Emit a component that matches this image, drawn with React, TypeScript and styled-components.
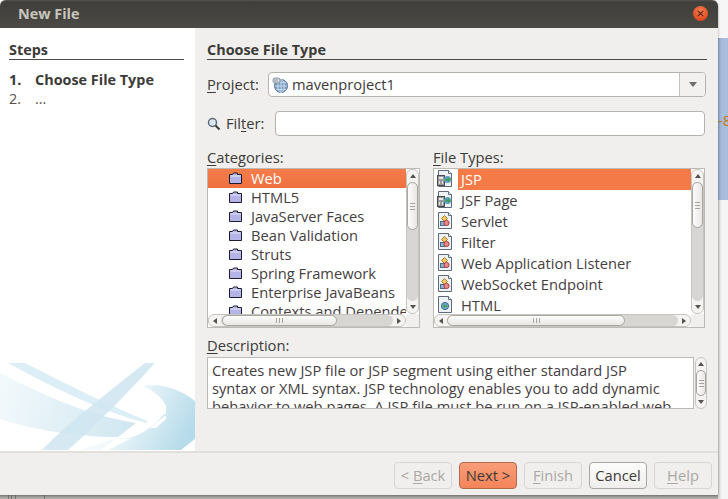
import React from 'react'
import styled, { createGlobalStyle } from 'styled-components'

const GlobalStyle = createGlobalStyle`
    html, body { margin: 0; padding: 0; background: #fff; }
    body { font-family: "Open Sans", "Noto Sans", "Liberation Sans", sans-serif; font-size: 14.7px; color: #3c3b37; }
`

const Screen = styled.div`
    width: 728px;
    height: 499px;
    overflow: hidden;
    display: grid;
    grid-template-columns: 718px 10px;
    grid-template-rows: 495px 4px;
`

const Dialog = styled.div`
    display: flex;
    flex-direction: column;
    background: #f0efed;
    border-radius: 6px 6px 0 0;
    box-shadow: 0 0 2px rgba(0, 0, 0, 0.5);
    position: relative;
    z-index: 1;
    grid-row: 1;
    grid-column: 1;
`

const TitleBar = styled.div`
    height: 28px;
    flex: none;
    display: flex;
    align-items: center;
    justify-content: space-between;
    padding: 0 10px 0 18px;
    border-radius: 6px 6px 0 0;
    background: linear-gradient(#55534d 0, #3f3e3a 2px, #4c4a45 100%);
`

const Title = styled.div`
    font-weight: 700;
    font-size: 14.4px;
    line-height: 18px;
    padding-bottom: 1px;
    color: #c8c5bc;
`

const CloseButton = styled.div`
    width: 15px;
    height: 15px;
    margin-bottom: 1px;
    border-radius: 50%;
    background: radial-gradient(circle at 50% 35%, #f58052, #de4a1e 75%);
    display: flex;
    align-items: center;
    justify-content: center;
`

const Main = styled.div`
    height: 423px;
    flex: none;
    display: flex;
`

const Sidebar = styled.div`
    width: 195px;
    flex: none;
    background: #fff;
    padding: 14px 11px 0 9px;
    box-sizing: border-box;
    display: flex;
    flex-direction: column;
`

const Heading = styled.div`
    font-weight: 700;
    font-size: 14.4px;
    line-height: 15px;
    border-bottom: 1px solid #4a4a46;
    height: 17px;
    white-space: nowrap;
`

const StepList = styled.div`
    margin-top: 11px;
    display: flex;
    flex-direction: column;
`

const Step = styled.div<{ $current?: boolean }>`
    display: flex;
    height: 19px;
    line-height: 17px;
    font-weight: ${(p) => (p.$current ? 700 : 400)};
    font-size: 14.4px;
    color: ${(p) => (p.$current ? '#3c3b37' : '#55534e')};
`

const StepNumber = styled.span`
    width: 26px;
`

const Watermark = styled.svg`
    display: block;
    width: 195px;
    height: 90px;
    margin: auto -11px 0 -9px;
    flex: none;
`

const Content = styled.div`
    flex: 1;
    padding: 14px 11px 0 12px;
    display: flex;
    flex-direction: column;
    min-width: 0;
`

const FormRow = styled.div<{ $top: number }>`
    display: flex;
    align-items: center;
    margin-top: ${(p) => p.$top}px;
    height: 25px;
`

const Label = styled.label<{ $width: number }>`
    width: ${(p) => p.$width}px;
    flex: none;
    white-space: nowrap;
    color: #3c3b37;
    padding-bottom: 2px;
    u { text-underline-offset: 2px; }
`

const Combo = styled.div`
    width: 438px;
    height: 25px;
    box-sizing: border-box;
    border: 1px solid #b5b3ae;
    border-radius: 4px;
    background: #fff;
    display: flex;
    align-items: center;
    padding-left: 3px;
    gap: 4px;
`

const ComboText = styled.span`
    padding-bottom: 2px;
`

const ComboArrow = styled.div`
    margin-left: auto;
    width: 25px;
    align-self: stretch;
    border-left: 1px solid #c4c2bd;
    border-radius: 0 3px 3px 0;
    background: #f2f1ef;
    display: flex;
    align-items: center;
    justify-content: center;
    &::after {
        content: '';
        border: 4px solid transparent;
        border-top: 5px solid #6e6d69;
        border-bottom: 0;
    }
`

const FilterIcon = styled.svg`
    width: 14px;
    height: 14px;
    margin-right: 5px;
    flex: none;
`

const TextInput = styled.div`
    width: 430px;
    height: 25px;
    box-sizing: border-box;
    border: 1px solid #b5b3ae;
    border-radius: 4px;
    background: #fff;
`

const Columns = styled.div`
    display: flex;
    gap: 13px;
    margin-top: 12px;
    height: 180px;
`

const Column = styled.div<{ $width: number }>`
    width: ${(p) => p.$width}px;
    display: flex;
    flex-direction: column;
`

const FieldLabel = styled.div`
    height: 20px;
    line-height: 18px;
    u { text-underline-offset: 2px; }
`

const ListBox = styled.div`
    height: 160px;
    box-sizing: border-box;
    border: 1px solid #bdbbb6;
    background: #fff;
    display: grid;
    grid-template-rows: 145px 13px;
    grid-template-columns: 1fr 13px;
`

const Viewport = styled.div`
    overflow: hidden;
    min-width: 0;
    min-height: 0;
`

const Row = styled.div<{ $height: number; $indent: number }>`
    height: ${(p) => p.$height}px;
    display: flex;
    align-items: center;
    padding-left: ${(p) => p.$indent}px;
    white-space: nowrap;
    color: #45403f;
`

const CategoryRow = styled(Row)<{ $selected?: boolean }>`
    background: ${(p) => (p.$selected ? 'linear-gradient(#f47c4a, #ee7240)' : 'transparent')};
    color: ${(p) => (p.$selected ? '#fff' : '#45403f')};
`

const CategoryName = styled.span`
    margin-left: 9px;
    padding-bottom: 1px;
`

const TypeLabel = styled.div<{ $selected?: boolean }>`
    flex: 1;
    height: 100%;
    box-sizing: border-box;
    display: flex;
    align-items: center;
    margin-left: 4px;
    padding: 0 0 2px 3px;
    background: ${(p) => (p.$selected ? '#f47b47' : 'transparent')};
    color: ${(p) => (p.$selected ? '#fff' : '#45403f')};
`

const Track = styled.div<{ $vertical?: boolean }>`
    display: flex;
    flex-direction: ${(p) => (p.$vertical ? 'column' : 'row')};
    background: #f4f3f1;
    border: 1px solid #c6c4bf;
    border-radius: 6px;
    box-sizing: border-box;
    min-width: 0;
    min-height: 0;
    overflow: hidden;
`

const Trough = styled.div<{ $vertical?: boolean }>`
    flex: 1;
    display: flex;
    flex-direction: ${(p) => (p.$vertical ? 'column' : 'row')};
    background: #d8d6d2;
    border-radius: 6px;
    min-width: 0;
    min-height: 0;
`

const Thumb = styled.div<{ $vertical?: boolean; $size: number; $offset?: number }>`
    flex: none;
    box-sizing: border-box;
    border: 1px solid #a8a6a1;
    border-radius: 6px;
    background: linear-gradient(${(p) => (p.$vertical ? '90deg' : '180deg')}, #fcfcfb, #e8e7e4);
    ${(p) => (p.$vertical ? `height: ${p.$size}px; margin-top: ${p.$offset ?? 0}px;` : `width: ${p.$size}px; margin-left: ${p.$offset ?? 0}px;`)}
    display: flex;
    flex-direction: ${(p) => (p.$vertical ? 'column' : 'row')};
    align-items: center;
    justify-content: center;
    gap: 2px;
`

const Grip = styled.span<{ $vertical?: boolean }>`
    background: #a5a39e;
    ${(p) => (p.$vertical ? 'width: 5px; height: 1px;' : 'width: 1px; height: 5px;')}
`

const Arrow = styled.div<{ $dir: 'up' | 'down' | 'left' | 'right' }>`
    flex: none;
    ${(p) => (p.$dir === 'up' || p.$dir === 'down' ? 'height: 12px;' : 'width: 12px;')}
    display: flex;
    align-items: center;
    justify-content: center;
    &::after {
        content: '';
        border: 3px solid transparent;
        ${(p) => `border-${{ up: 'bottom', down: 'top', left: 'right', right: 'left' }[p.$dir]}: 4px solid #55534e;`}
        ${(p) => `border-${p.$dir === 'up' ? 'top' : p.$dir === 'down' ? 'bottom' : p.$dir}: 0;`}
    }
`

const Corner = styled.div`
    background: #f0efed;
`

const DescriptionRow = styled.div`
    display: flex;
    height: 52px;
    gap: 1px;
`

const DescriptionBox = styled.div`
    flex: 1;
    box-sizing: border-box;
    border: 1px solid #bdbbb6;
    background: #fff;
    padding: 3px 4px;
    overflow: hidden;
    line-height: 18px;
    color: #45403f;
    white-space: nowrap;
`

const DescriptionLabel = styled(FieldLabel)`
    margin-top: 7px;
    height: 22px;
    line-height: 20px;
`

const SmallTrack = styled(Track)`
    width: 12px;
    flex: none;
`

const Footer = styled.div`
    flex: 1;
    border-top: 2px solid #e2e0dc;
    display: flex;
    justify-content: flex-end;
    gap: 7px;
    padding: 9px 6px 0 0;
    box-sizing: border-box;
`

const Button = styled.div<{ $variant?: 'primary' | 'disabled' }>`
    width: 58px;
    height: 27px;
    box-sizing: border-box;
    padding-bottom: 2px;
    border-radius: 4px;
    display: flex;
    align-items: center;
    justify-content: center;
    white-space: nowrap;
    border: 1px solid ${(p) => (p.$variant === 'primary' ? '#b06a4a' : p.$variant === 'disabled' ? '#d8d6d2' : '#a9a7a2')};
    background: ${(p) =>
        p.$variant === 'primary' ? 'linear-gradient(#f89d78, #f4845a)' : p.$variant === 'disabled' ? '#f0efed' : 'linear-gradient(#fcfcfb, #efeeec)'};
    color: ${(p) => (p.$variant === 'disabled' ? '#aaa8a3' : '#3c3b37')};
    u { text-underline-offset: 2px; }
`

const DesktopStrip = styled.div`
    grid-row: 1 / 3;
    grid-column: 2;
    display: flex;
    flex-direction: column;
    overflow: hidden;
`

const StripTop = styled.div`
    height: 38px;
    background: #f6f6f6;
`

const StripBlue = styled.div`
    height: 162px;
    background: linear-gradient(90deg, #8fa3c4, #a9bcdc 40%);
    color: #c77a14;
    font-size: 15px;
    line-height: 20px;
    padding-top: 72px;
    box-sizing: border-box;
    white-space: nowrap;
`

const StripRest = styled.div`
    flex: 1;
    background: linear-gradient(90deg, #d0cfcd, #f5f5f5 40%);
`

const BottomStrip = styled.div`
    grid-row: 2;
    grid-column: 1;
    background: linear-gradient(#8e8c88, #b3b2ae);
    padding-left: 8px;
    display: flex;
    gap: 3px;
`

const BottomTab = styled.span<{ $width: number }>`
    width: ${(p) => p.$width}px;
    border-left: 1px solid #76746f;
    border-right: 1px solid #76746f;
`

const RowIcon = styled.svg`
    flex: none;
    margin-bottom: 2px;
`

const ProjectIcon = styled.svg`
    flex: none;
`

const Scrollbar = ({ vertical, size, offset = 0 }: { vertical?: boolean; size: number; offset?: number }) => (
    <Track $vertical={vertical}>
        <Arrow $dir={vertical ? 'up' : 'left'} />
        <Trough $vertical={vertical}>
            <Thumb $vertical={vertical} $size={size} $offset={offset}>
                <Grip $vertical={vertical} />
                <Grip $vertical={vertical} />
                <Grip $vertical={vertical} />
            </Thumb>
        </Trough>
        <Arrow $dir={vertical ? 'down' : 'right'} />
    </Track>
)

const FolderIcon = () => (
    <RowIcon width="13" height="12" viewBox="0 0 13 12">
        <path d="M.5 2.5h3l1-1.5h4v1.5h4v9H.5z" fill="#b4b4e6" stroke="#1c1c30" />
        <path d="M1.5 3.5h10v1h-10z" fill="#e4e4f8" />
    </RowIcon>
)

const PageBase = () => (
    <>
        <path d="M2.5 1.5h10l3 3v13h-13z" fill="#eef2f6" stroke="#5d6a78" />
        <path d="M12.5 1.5v3h3" fill="#fff" stroke="#5d6a78" />
    </>
)

const JspIcon = () => (
    <RowIcon width="18" height="19" viewBox="0 0 18 19">
        <PageBase />
        <rect x="1.5" y="6.5" width="7" height="10" fill="#9a9a9a" stroke="#4a4a4a" />
        <rect x="3" y="8" width="4" height="2" fill="#e6e6e6" />
        <rect x="3" y="12" width="1" height="3" fill="#e6e6e6" />
        <rect x="6" y="12" width="1" height="3" fill="#e6e6e6" />
        <circle cx="11.5" cy="10.5" r="3.5" fill="#5aa0c8" />
        <path d="M9.5 9.5h2.5V8l2.5 2.5-2.5 2.5v-1.5H9.5z" fill="#3fa040" />
    </RowIcon>
)

const ServletIcon = () => (
    <RowIcon width="18" height="19" viewBox="0 0 18 19">
        <PageBase />
        <path d="M8.5 4.5l3 3-3 3-3-3z" fill="#f2c76a" stroke="#a8801f" />
        <rect x="4.5" y="10.5" width="5" height="4" fill="#8fb5d6" stroke="#4b6a87" />
        <circle cx="10.5" cy="12" r="2.6" fill="#e98888" stroke="#a83e3e" />
    </RowIcon>
)

const HtmlIcon = () => (
    <RowIcon width="18" height="19" viewBox="0 0 18 19">
        <PageBase />
        <circle cx="9" cy="11" r="3.6" fill="#6fa8c6" stroke="#3e6e8a" />
        <path d="M7 11l2-2v1.3h2v1.4H9V13z" fill="#3fa040" />
    </RowIcon>
)

const GlobeIcon = () => (
    <ProjectIcon width="16" height="16" viewBox="0 0 16 16">
        <circle cx="9" cy="9" r="6.5" fill="#7fa3c7" stroke="#4a6d91" />
        <path d="M2.5 9h13M9 2.5v13M4 5.5h10M4 12.5h10" stroke="#d4e1ee" strokeWidth="0.8" fill="none" />
        <ellipse cx="9" cy="9" rx="3.2" ry="6.5" stroke="#d4e1ee" strokeWidth="0.8" fill="none" />
        <rect x="1" y="1" width="7" height="5" rx="2" fill="#dfe4ea" stroke="#6d7a88" strokeWidth="0.8" />
        <path d="M3 2v3M5 2v3" stroke="#6d7a88" strokeWidth="0.8" />
    </ProjectIcon>
)

const categories = ['Web', 'HTML5', 'JavaServer Faces', 'Bean Validation', 'Struts', 'Spring Framework', 'Enterprise JavaBeans', 'Contexts and Dependency Injection']

const fileTypes = [
    { name: 'JSP', icon: <JspIcon /> },
    { name: 'JSF Page', icon: <JspIcon /> },
    { name: 'Servlet', icon: <ServletIcon /> },
    { name: 'Filter', icon: <ServletIcon /> },
    { name: 'Web Application Listener', icon: <ServletIcon /> },
    { name: 'WebSocket Endpoint', icon: <ServletIcon /> },
    { name: 'HTML', icon: <HtmlIcon /> },
]

const App = () => {
    return (
        <Screen>
            <GlobalStyle />
            <Dialog>
                <TitleBar>
                    <Title>New File</Title>
                    <CloseButton>
                        <svg width="7" height="7" viewBox="0 0 7 7">
                            <path d="M.8.8l5.4 5.4M6.2.8L.8 6.2" stroke="#5a2410" strokeWidth="1.2" />
                        </svg>
                    </CloseButton>
                </TitleBar>
                <Main>
                    <Sidebar>
                        <Heading>Steps</Heading>
                        <StepList>
                            <Step $current>
                                <StepNumber>1.</StepNumber>Choose File Type
                            </Step>
                            <Step>
                                <StepNumber>2.</StepNumber>...
                            </Step>
                        </StepList>
                        <Watermark viewBox="0 0 195 90">
                            <defs>
                                <linearGradient id="band" gradientUnits="userSpaceOnUse" x1="0" y1="30" x2="136" y2="70">
                                    <stop offset="0" stopColor="#f2f9fc" />
                                    <stop offset="1" stopColor="#cfe6f0" />
                                </linearGradient>
                                <linearGradient id="swoosh" gradientUnits="userSpaceOnUse" x1="125" y1="35" x2="190" y2="70">
                                    <stop offset="0" stopColor="#f4fafc" />
                                    <stop offset="1" stopColor="#b6dbea" />
                                </linearGradient>
                            </defs>
                            <path d="M0 12C45 35 90 55 136 62L118 76C75 76 30 68 0 58z" fill="url(#band)" />
                            <path d="M8 2H25C70 25 110 45 148 60L146 62C100 50 50 25 8 2z" fill="#dceef6" />
                            <path d="M155 2H145C110 30 70 60 42 89H68C90 70 125 35 155 2z" fill="#cfe5f0" opacity="0.85" />
                            <path d="M143 25C165 22 182 30 195 40V78L181 89H80L115 78L130 77C150 70 166 55 166 45C163 38 155 30 143 25z" fill="url(#swoosh)" />
                            <path d="M166 47L140 67H146L166 52z" fill="#fff" />
                            <path d="M166 54L150 67H156L166 58z" fill="#fff" />
                            <path d="M115 78H130L108 89H100z" fill="#fff" />
                        </Watermark>
                    </Sidebar>
                    <Content>
                        <Heading>Choose File Type</Heading>
                        <FormRow $top={12}>
                            <Label $width={61}>
                                <u>P</u>roject:
                            </Label>
                            <Combo>
                                <GlobeIcon />
                                <ComboText>mavenproject1</ComboText>
                                <ComboArrow />
                            </Combo>
                        </FormRow>
                        <FormRow $top={14}>
                            <FilterIcon viewBox="0 0 14 14">
                                <circle cx="5.5" cy="5.5" r="4" fill="#dce8f2" stroke="#5c6a78" strokeWidth="1.5" />
                                <path d="M8.5 8.5l4 4" stroke="#3c3b37" strokeWidth="2" />
                            </FilterIcon>
                            <Label $width={49}>
                                Fil<u>t</u>er:
                            </Label>
                            <TextInput />
                        </FormRow>
                        <Columns>
                            <Column $width={213}>
                                <FieldLabel>
                                    <u>C</u>ategories:
                                </FieldLabel>
                                <ListBox>
                                    <Viewport>
                                        {categories.map((name, i) => (
                                            <CategoryRow key={name} $height={19} $indent={21} $selected={i === 0}>
                                                <FolderIcon />
                                                <CategoryName>{name}</CategoryName>
                                            </CategoryRow>
                                        ))}
                                    </Viewport>
                                    <Scrollbar vertical size={48} />
                                    <Scrollbar size={115} offset={1} />
                                    <Corner />
                                </ListBox>
                            </Column>
                            <Column $width={272}>
                                <FieldLabel>
                                    <u>F</u>ile Types:
                                </FieldLabel>
                                <ListBox>
                                    <Viewport>
                                        {fileTypes.map((type, i) => (
                                            <Row key={type.name} $height={21} $indent={2}>
                                                {type.icon}
                                                <TypeLabel $selected={i === 0}>{type.name}</TypeLabel>
                                            </Row>
                                        ))}
                                    </Viewport>
                                    <Scrollbar vertical size={46} />
                                    <Scrollbar size={178} />
                                    <Corner />
                                </ListBox>
                            </Column>
                        </Columns>
                        <DescriptionLabel>
                            <u>D</u>escription:
                        </DescriptionLabel>
                        <DescriptionRow>
                            <DescriptionBox>
                                Creates new JSP file or JSP segment using either standard JSP
                                <br />
                                syntax or XML syntax. JSP technology enables you to add dynamic
                                <br />
                                behavior to web pages. A JSP file must be run on a JSP-enabled web
                                <br />
                                server.
                            </DescriptionBox>
                            <SmallTrack $vertical>
                                <Arrow $dir="up" />
                                <Trough $vertical>
                                    <Thumb $vertical $size={26}>
                                        <Grip $vertical />
                                        <Grip $vertical />
                                        <Grip $vertical />
                                    </Thumb>
                                </Trough>
                                <Arrow $dir="down" />
                            </SmallTrack>
                        </DescriptionRow>
                    </Content>
                </Main>
                <Footer>
                    <Button $variant="disabled">
                        &lt;&nbsp;<u>B</u>ack
                    </Button>
                    <Button $variant="primary">Next &gt;</Button>
                    <Button $variant="disabled">
                        <u>F</u>inish
                    </Button>
                    <Button>Cancel</Button>
                    <Button $variant="disabled">
                        <u>H</u>elp
                    </Button>
                </Footer>
            </Dialog>
            <BottomStrip>
                <BottomTab $width={2} />
                <BottomTab $width={28} />
            </BottomStrip>
            <DesktopStrip>
                <StripTop />
                <StripBlue>-8</StripBlue>
                <StripRest />
            </DesktopStrip>
        </Screen>
    )
}

export default App
